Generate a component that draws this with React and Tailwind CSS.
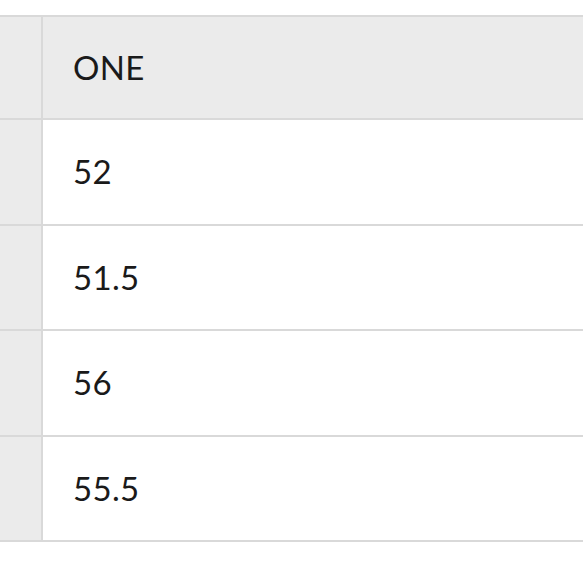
import React from "react";

const rows = ["52", "51.5", "56", "55.5"];

const Row = ({ children, header }) => {
  return (
    <div className="flex border-b-2 border-[#d9d9d9]">
      <div className="w-[43px] shrink-0 bg-[#ebebeb] border-r-2 border-[#d9d9d9]" />
      <div
        className={`flex flex-1 items-center pl-[30px] ${
          header ? "h-[101px] bg-[#ebebeb]" : "h-[103.5px] bg-white"
        }`}
      >
        <span className="text-[33px] leading-none tracking-[0.01em] text-[#1a1a1a]">
          {children}
        </span>
      </div>
    </div>
  );
};

const App = () => {
  return (
    <div
      className="w-[583px] h-[583px] overflow-hidden bg-white pt-[15px]"
      style={{ fontFamily: "Lato, 'Open Sans', sans-serif" }}
    >
      <div className="border-t-2 border-[#d9d9d9]">
        <Row header>ONE</Row>
        {rows.map((r) => (
          <Row key={r}>{r}</Row>
        ))}
      </div>
    </div>
  );
};

export default App;
